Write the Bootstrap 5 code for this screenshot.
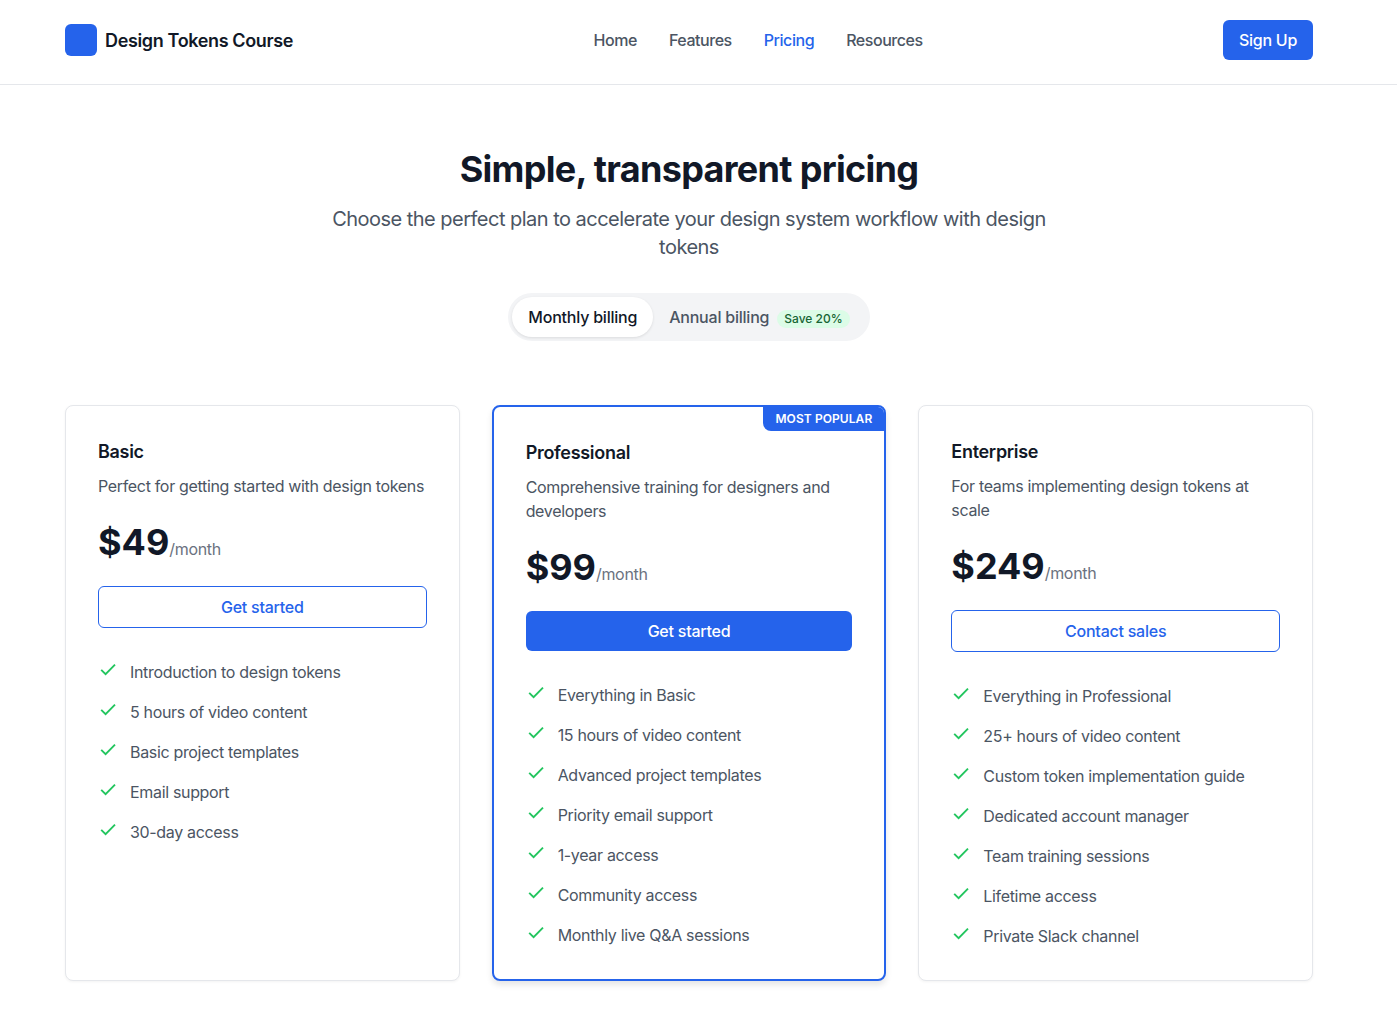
<!DOCTYPE html>
<html lang="en">
<head>
  <meta charset="UTF-8">
  <meta name="viewport" content="width=device-width, initial-scale=1.0">
  <title>Design Tokens Course - Pricing</title>
  <link href="https://cdn.jsdelivr.net/npm/bootstrap@5.3.0/dist/css/bootstrap.min.css" rel="stylesheet">
  <style>
    html { overflow: hidden; }
    body { font-family: Inter, "Liberation Sans", sans-serif; color: #111827; height: 1018px; overflow: hidden; letter-spacing: -.33px; }
    .inner { width: 1248px; margin-left: 65px; }
    .site-head { height: 85px; border-bottom: 1px solid #e5e7eb; }
    .head-row { height: 80px; }
    .brand-box { width: 32px; height: 32px; background: #2563eb; border-radius: 6px; }
    .brand-name { font-size: 18px; font-weight: 600; color: #111827; letter-spacing: -.36px; }
    .top-links { gap: 32px; }
    .top-links a { font-size: 16px; font-weight: 500; color: #4b5563; text-decoration: none; letter-spacing: -.45px; }
    .top-links a.current { color: #2563eb; }
    .btn-signup { background: #2563eb; color: #fff; font-weight: 500; font-size: 16px; border-radius: 6px; padding: 8px 16px; height: 40px; border: 0; letter-spacing: -.28px; }
    .hero { padding-top: 64px; }
    .hero h1 { font-size: 36px; font-weight: 700; line-height: 40px; color: #111827; margin-bottom: 16px; letter-spacing: -.68px; }
    .hero-sub { font-size: 20px; line-height: 28px; color: #4b5563; width: 768px; margin: 0 auto 32px; letter-spacing: -.52px; }
    .billing { background: #f3f4f6; border-radius: 24px; padding: 4px; width: fit-content; margin: 0 auto 64px; height: 48px; }
    .bill-opt { font-size: 16px; font-weight: 500; color: #4b5563; padding: 8px 16px; border-radius: 20px; line-height: 24px; height: 40px; letter-spacing: -.22px; }
    .bill-opt.on { background: #fff; color: #111827; box-shadow: 0 1px 3px rgba(0,0,0,.1); }
    .save-tag { background: #dcfce7; color: #166534; font-size: 12px; line-height: 16px; padding: 1px 7px; border-radius: 9999px; margin-left: 4px; font-weight: 500; display: inline-block; letter-spacing: 0; }
    .plans { display: grid; grid-template-columns: repeat(3, 1fr); gap: 32px; }
    .plan { border: 1px solid #e5e7eb; border-radius: 8px; padding: 32px; height: 576px; box-shadow: 0 1px 3px rgba(0,0,0,.05); position: relative; background: #fff; overflow: hidden; }
    .plan.featured { border: 2px solid #2563eb; box-shadow: 0 4px 6px rgba(0,0,0,.1); }
    .pop-tag { position: absolute; top: 0; right: 0; background: #2563eb; color: #fff; font-size: 12px; font-weight: 600; line-height: 16px; padding: 4px 12px; border-bottom-left-radius: 8px; letter-spacing: .08px; }
    .plan h3 { font-size: 18px; font-weight: 600; line-height: 28px; margin-bottom: 8px; color: #111827; letter-spacing: -.3px; }
    .plan-desc { font-size: 16px; line-height: 24px; color: #4b5563; margin-bottom: 24px; }
    .price-row { margin-bottom: 24px; line-height: 40px; height: 40px; }
    .price-num { font-size: 36px; font-weight: 700; color: #111827; letter-spacing: 0; }
    .price-per { font-size: 16px; color: #6b7280; }
    .btn-plan { display: block; width: 100%; font-size: 16px; font-weight: 500; border-radius: 6px; height: 42px; padding: 8px 16px; border: 1px solid #2563eb; color: #2563eb; background: #fff; margin-bottom: 32px; letter-spacing: -.24px; }
    .btn-plan.solid { background: #2563eb; color: #fff; height: 40px; border: 0; }
    .feat-list { list-style: none; margin: 0; padding: 0; }
    .feat-list li { display: flex; gap: 12px; font-size: 16px; line-height: 24px; color: #4b5563; margin-bottom: 16px; }
    .feat-list svg { width: 20px; height: 20px; flex: none; color: #22c55e; }
  </style>
</head>

<body>
  <!-- Header -->
  <header class="site-head">
    <div class="inner head-row d-flex align-items-center justify-content-between">
      <a class="d-flex align-items-center gap-2 text-decoration-none" href="#">
        <span class="brand-box"></span>
        <span class="brand-name">Design Tokens Course</span>
      </a>
      <nav class="d-flex top-links">
        <a href="#">Home</a>
        <a href="#">Features</a>
        <a href="#" class="current">Pricing</a>
        <a href="#">Resources</a>
      </nav>
      <button class="btn btn-signup" type="button">Sign Up</button>
    </div>
  </header>

  <main class="inner">
    <section class="hero text-center">
      <h1>Simple, transparent pricing</h1>
      <p class="hero-sub">Choose the perfect plan to accelerate your design system workflow with design tokens</p>
      <div class="billing d-flex">
        <div class="bill-opt on">Monthly billing</div>
        <div class="bill-opt">Annual billing <span class="save-tag">Save 20%</span></div>
      </div>
    </section>

    <section class="plans">
      <div class="plan">
        <h3>Basic</h3>
        <p class="plan-desc">Perfect for getting started with design tokens</p>
        <div class="price-row"><span class="price-num">$49</span><span class="price-per">/month</span></div>
        <button class="btn-plan" type="button">Get started</button>
        <ul class="feat-list">
          <li><svg viewBox="0 0 20 20" fill="none" stroke="currentColor" stroke-width="1.9"><path d="M3.2 9.8l4.4 4.4L17 4.7"/></svg>Introduction to design tokens</li>
          <li><svg viewBox="0 0 20 20" fill="none" stroke="currentColor" stroke-width="1.9"><path d="M3.2 9.8l4.4 4.4L17 4.7"/></svg>5 hours of video content</li>
          <li><svg viewBox="0 0 20 20" fill="none" stroke="currentColor" stroke-width="1.9"><path d="M3.2 9.8l4.4 4.4L17 4.7"/></svg>Basic project templates</li>
          <li><svg viewBox="0 0 20 20" fill="none" stroke="currentColor" stroke-width="1.9"><path d="M3.2 9.8l4.4 4.4L17 4.7"/></svg>Email support</li>
          <li><svg viewBox="0 0 20 20" fill="none" stroke="currentColor" stroke-width="1.9"><path d="M3.2 9.8l4.4 4.4L17 4.7"/></svg>30-day access</li>
        </ul>
      </div>

      <div class="plan featured">
        <div class="pop-tag">MOST POPULAR</div>
        <h3>Professional</h3>
        <p class="plan-desc">Comprehensive training for designers and developers</p>
        <div class="price-row"><span class="price-num">$99</span><span class="price-per">/month</span></div>
        <button class="btn-plan solid" type="button">Get started</button>
        <ul class="feat-list">
          <li><svg viewBox="0 0 20 20" fill="none" stroke="currentColor" stroke-width="1.9"><path d="M3.2 9.8l4.4 4.4L17 4.7"/></svg>Everything in Basic</li>
          <li><svg viewBox="0 0 20 20" fill="none" stroke="currentColor" stroke-width="1.9"><path d="M3.2 9.8l4.4 4.4L17 4.7"/></svg>15 hours of video content</li>
          <li><svg viewBox="0 0 20 20" fill="none" stroke="currentColor" stroke-width="1.9"><path d="M3.2 9.8l4.4 4.4L17 4.7"/></svg>Advanced project templates</li>
          <li><svg viewBox="0 0 20 20" fill="none" stroke="currentColor" stroke-width="1.9"><path d="M3.2 9.8l4.4 4.4L17 4.7"/></svg>Priority email support</li>
          <li><svg viewBox="0 0 20 20" fill="none" stroke="currentColor" stroke-width="1.9"><path d="M3.2 9.8l4.4 4.4L17 4.7"/></svg>1-year access</li>
          <li><svg viewBox="0 0 20 20" fill="none" stroke="currentColor" stroke-width="1.9"><path d="M3.2 9.8l4.4 4.4L17 4.7"/></svg>Community access</li>
          <li><svg viewBox="0 0 20 20" fill="none" stroke="currentColor" stroke-width="1.9"><path d="M3.2 9.8l4.4 4.4L17 4.7"/></svg>Monthly live Q&amp;A sessions</li>
        </ul>
      </div>

      <div class="plan">
        <h3>Enterprise</h3>
        <p class="plan-desc">For teams implementing design tokens at scale</p>
        <div class="price-row"><span class="price-num">$249</span><span class="price-per">/month</span></div>
        <button class="btn-plan" type="button">Contact sales</button>
        <ul class="feat-list">
          <li><svg viewBox="0 0 20 20" fill="none" stroke="currentColor" stroke-width="1.9"><path d="M3.2 9.8l4.4 4.4L17 4.7"/></svg>Everything in Professional</li>
          <li><svg viewBox="0 0 20 20" fill="none" stroke="currentColor" stroke-width="1.9"><path d="M3.2 9.8l4.4 4.4L17 4.7"/></svg>25+ hours of video content</li>
          <li><svg viewBox="0 0 20 20" fill="none" stroke="currentColor" stroke-width="1.9"><path d="M3.2 9.8l4.4 4.4L17 4.7"/></svg>Custom token implementation guide</li>
          <li><svg viewBox="0 0 20 20" fill="none" stroke="currentColor" stroke-width="1.9"><path d="M3.2 9.8l4.4 4.4L17 4.7"/></svg>Dedicated account manager</li>
          <li><svg viewBox="0 0 20 20" fill="none" stroke="currentColor" stroke-width="1.9"><path d="M3.2 9.8l4.4 4.4L17 4.7"/></svg>Team training sessions</li>
          <li><svg viewBox="0 0 20 20" fill="none" stroke="currentColor" stroke-width="1.9"><path d="M3.2 9.8l4.4 4.4L17 4.7"/></svg>Lifetime access</li>
          <li><svg viewBox="0 0 20 20" fill="none" stroke="currentColor" stroke-width="1.9"><path d="M3.2 9.8l4.4 4.4L17 4.7"/></svg>Private Slack channel</li>
        </ul>
      </div>
    </section>
  </main>

  <script src="https://cdn.jsdelivr.net/npm/bootstrap@5.3.0/dist/js/bootstrap.bundle.min.js"></script>
</body>
</html>
